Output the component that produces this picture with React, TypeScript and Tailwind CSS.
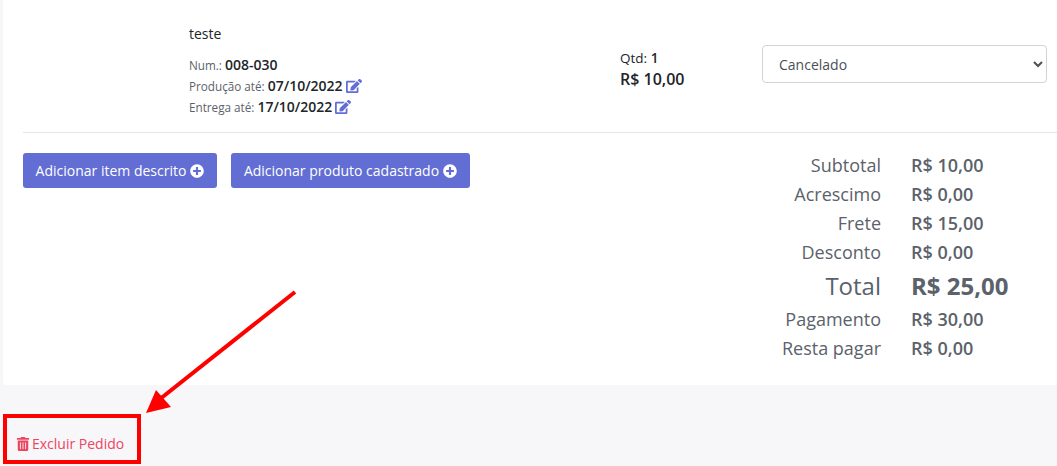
import { FaEdit, FaPlusCircle, FaTrashAlt } from "react-icons/fa";

const totals = [
  { label: "Subtotal", value: "R$ 10,00" },
  { label: "Acrescimo", value: "R$ 0,00" },
  { label: "Frete", value: "R$ 15,00" },
  { label: "Desconto", value: "R$ 0,00" },
  { label: "Total", value: "R$ 25,00", big: true },
  { label: "Pagamento", value: "R$ 30,00" },
  { label: "Resta pagar", value: "R$ 0,00" },
];

function AddButton({ label, width }: { label: string; width: string }) {
  return (
    <button
      type="button"
      className={`flex h-[35px] items-center justify-center gap-[4px] rounded-[3px] bg-[#626ed4] text-[14px] text-white ${width}`}
    >
      {label}
      <FaPlusCircle className="text-[14px]" />
    </button>
  );
}

export default function App() {
  return (
    <div className="relative h-[466px] w-[1057px] overflow-hidden bg-[#f7f7f9] font-['Open_Sans',sans-serif] text-[#212529]">
      <div className="ml-[3px] h-[385px] rounded-bl-[4px] bg-white pl-[20px]">
        {/* item */}
        <div className="flex h-[133px] border-b border-[#e4e4e9]">
          <div className="ml-[166px] w-[431px] pt-[24px]">
            <p className="text-[14px] leading-[19px]">teste</p>
            <div className="mt-[11px] text-[11.7px] text-[#5b626b]">
              <p className="h-[21px] leading-[21px]">
                Num.: <span className="text-[14px] font-semibold text-[#212529]">008-030</span>
              </p>
              <p className="flex h-[21px] items-center gap-[3px] leading-[21px]">
                <span>
                  Produção até: <span className="text-[14px] font-semibold text-[#212529]">07/10/2022</span>
                </span>
                <FaEdit className="text-[16px] text-[#626ed4]" />
              </p>
              <p className="flex h-[21px] items-center gap-[3px] leading-[21px]">
                <span>
                  Entrega até: <span className="text-[14px] font-semibold text-[#212529]">17/10/2022</span>
                </span>
                <FaEdit className="text-[16px] text-[#626ed4]" />
              </p>
            </div>
          </div>
          <div className="w-[142px] pt-[49px]">
            <p className="text-[13.5px] leading-[19px]">
              Qtd: <span className="font-semibold">1</span>
            </p>
            <p className="text-[16px] leading-[23px] font-semibold">R$ 10,00</p>
          </div>
          <div className="pt-[45px]">
            <select
              defaultValue="Cancelado"
              className="h-[38px] w-[285px] rounded-[4px] border border-[#ced4da] bg-white pl-[12px] text-[14px] text-[#495057]"
            >
              <option>Cancelado</option>
            </select>
          </div>
        </div>
        {/* actions and totals */}
        <div className="flex justify-between pt-[18px]">
          <div className="mt-[2px] flex items-start gap-[14px]">
            <AddButton label="Adicionar item descrito" width="w-[194px]" />
            <AddButton label="Adicionar produto cadastrado" width="w-[239px]" />
          </div>
          <div className="w-[297px] -translate-x-[28px] text-[#5b626b]">
            {totals.map((row) => (
              <div
                key={row.label}
                className={row.big ? "flex h-[38px] items-center" : "flex h-[29px] items-center"}
              >
                <span className={`w-[149px] text-right ${row.big ? "text-[24px]" : "text-[18px]"}`}>
                  {row.label}
                </span>
                <span className={`ml-[30px] ${row.big ? "text-[24px] font-bold" : "text-[18px] font-semibold"}`}>
                  {row.value}
                </span>
              </div>
            ))}
          </div>
        </div>
      </div>
      <a className="flex items-center gap-[2px] pt-[49px] pl-[16px] text-[14px] leading-[19px] text-[#ec4561]">
        <FaTrashAlt className="text-[14px]" />
        Excluir Pedido
      </a>
      {/* annotation */}
      <div className="absolute top-[414px] left-[3px] h-[50px] w-[138px] border-[4px] border-[#ff0000]" />
      <svg className="absolute top-0 left-0" width="1057" height="466" viewBox="0 0 1057 466">
        <line x1="295" y1="292" x2="160" y2="399" stroke="#ff0000" strokeWidth="4" />
        <polygon points="146,413 156,390 171,407" fill="#ff0000" />
      </svg>
    </div>
  );
}
